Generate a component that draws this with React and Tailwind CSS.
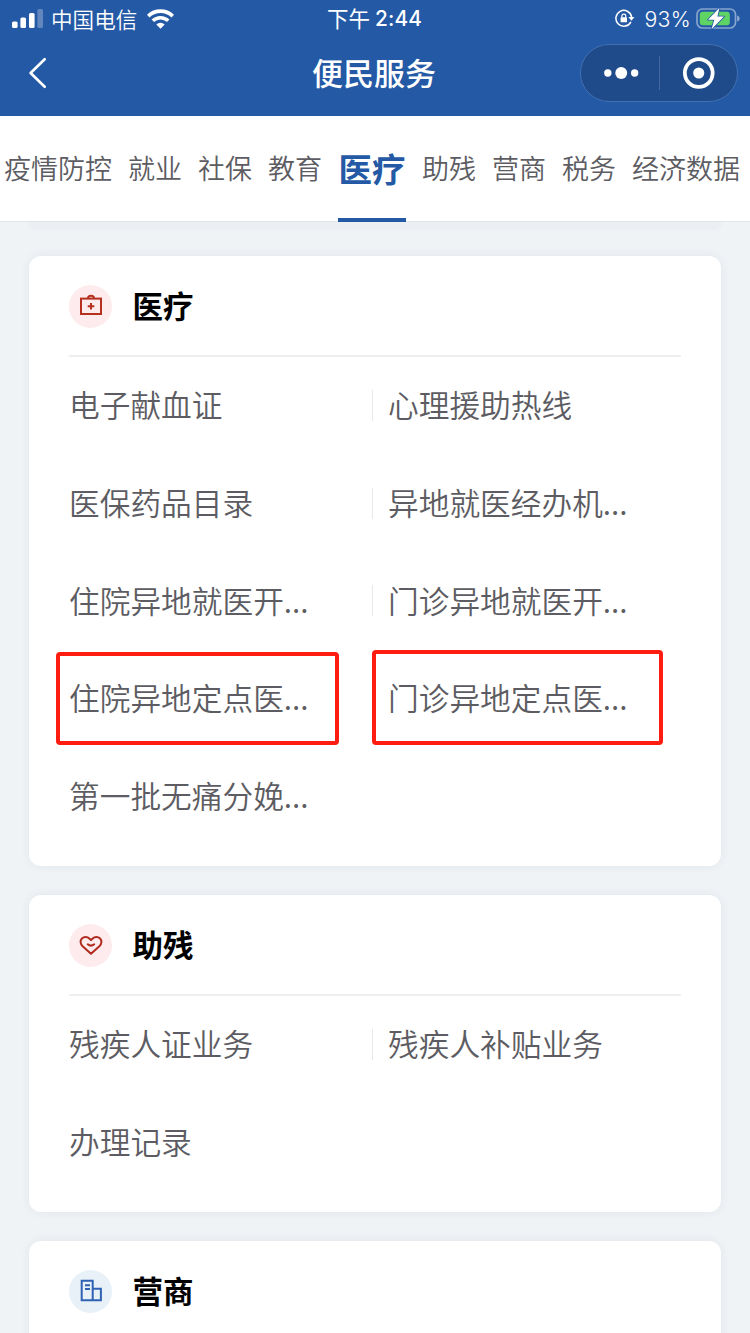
const tabs = ['疫情防控', '就业', '社保', '教育', '医疗', '助残', '营商', '税务', '经济数据'];

const medical = [
  ['电子献血证', '心理援助热线'],
  ['医保药品目录', '异地就医经办机...'],
  ['住院异地就医开...', '门诊异地就医开...'],
  ['住院异地定点医...', '门诊异地定点医...'],
  ['第一批无痛分娩...'],
];

const disability = [['残疾人证业务', '残疾人补贴业务'], ['办理记录']];

function StatusBar() {
  return (
    <div className="grid h-[38px] grid-cols-[1fr_auto_1fr] items-center pl-3 pr-[10px] text-[21px] leading-none">
      <div className="flex items-center">
        <svg width="31" height="20" viewBox="0 0 31 20" fill="#fff">
          <rect x="0" y="12.5" width="5.6" height="6.5" rx="1.5" />
          <rect x="8.4" y="8.5" width="5.6" height="10.5" rx="1.5" />
          <rect x="17" y="4" width="5.6" height="15" rx="1.5" />
          <rect x="25.4" y="0" width="5.6" height="19" rx="1.5" opacity=".28" />
        </svg>
        <span className="ml-2 pb-px text-[21.6px] font-[350]">中国电信</span>
        <svg className="ml-[10px]" width="27" height="20" viewBox="0 0 27 20" fill="none" stroke="#fff" strokeWidth="3.6">
          <path d="M1.2 7.1a17.6 17.6 0 0 1 24.6 0" />
          <path d="M5.8 11.8a11.2 11.2 0 0 1 15.4 0" />
          <path d="M9.3 15.4a6.2 6.2 0 0 1 8.4 0L13.5 19.8Z" fill="#fff" stroke="none" />
        </svg>
      </div>
      <div className="-ml-[3px] flex items-center gap-[5px]">
        <span className="-mt-[2px] text-[21.5px]">下午</span>
        <span className="font-['Inter'] text-[20.8px] font-medium tracking-[0.2px]">2:44</span>
      </div>
      <div className="flex items-center justify-end">
        <svg width="20" height="19" viewBox="0 0 20 19" fill="none" stroke="#fff" strokeWidth="1.5">
          <path d="M15.9 12.8A7.9 7.9 0 1 1 16.6 8" />
          <path d="M13.4 8h6l-3 3.8Z" fill="#fff" stroke="none" />
          <rect x="5.6" y="8.3" width="6.4" height="5" rx=".6" fill="#fff" stroke="none" />
          <path d="M6.9 8.6V7a1.9 1.9 0 0 1 3.8 0v1.6" strokeWidth="1.2" />
        </svg>
        <span className="ml-[9px] pt-px font-['Inter'] text-[21.3px] font-light tracking-[0.3px]">93%</span>
        <svg className="-mt-px ml-[5px]" width="44" height="23" viewBox="0 0 44 23">
          <rect x="1" y="2" width="38.5" height="19" rx="5.5" fill="none" stroke="#fff" strokeOpacity=".45" strokeWidth="1.7" />
          <rect x="3.8" y="4.8" width="30" height="13.4" rx="3" fill="#5fd364" />
          <path d="M41.2 8.4v6.2c1.6-.6 2.4-1.6 2.4-3.1s-.8-2.5-2.4-3.1Z" fill="#fff" fillOpacity=".5" />
          <path d="M23.5 .8 12 12.8h6.300l-2.800 9.400L28 9.600h-6.600Z" fill="#fff" stroke="#2459a5" strokeWidth="1.6" strokeLinejoin="round" paintOrder="stroke" />
        </svg>
      </div>
    </div>
  );
}

function NavBar() {
  return (
    <div className="grid h-[70px] grid-cols-[1fr_auto_1fr] items-center px-[12px]">
      <svg className="ml-4" width="20" height="32" viewBox="0 0 20 32" fill="none" stroke="#fff" strokeWidth="2.6" strokeLinecap="round" strokeLinejoin="round">
        <path d="M16.7 2.2 2.600 16l14.100 13.800" />
      </svg>
      <h1 className="-ml-[2px] -mt-[4px] text-[31px] font-medium leading-none">便民服务</h1>
      <div className="flex h-[58px] w-[158px] items-center justify-self-end rounded-full border border-[#4270b0] bg-[#1f4b8b]">
        <svg width="78" height="34" viewBox="0 0 78 34" fill="#fff">
          <circle cx="27" cy="17" r="3.7" />
          <circle cx="40.5" cy="17" r="6" />
          <circle cx="54" cy="17" r="3.7" />
        </svg>
        <div className="h-[34px] w-px bg-[#4468a0]" />
        <svg width="78" height="34" viewBox="0 0 78 34">
          <circle cx="39" cy="17" r="14" fill="none" stroke="#fff" strokeWidth="3.8" />
          <circle cx="39" cy="17" r="5.6" fill="#fff" />
        </svg>
      </div>
    </div>
  );
}

function Tabs() {
  return (
    <nav className="flex h-[106px] gap-4 border-b border-[#e4e7ea] bg-white pl-1">
      {tabs.map((t) =>
        t === '医疗' ? (
          <div key={t} className="-mb-px flex w-[68px] shrink-0 items-center justify-center border-b-4 border-[#2459a5] pt-px text-[33.5px] font-bold leading-none text-[#2459a5]">
            {t}
          </div>
        ) : (
          <div key={t} className="flex shrink-0 items-center pb-[2px] text-[27px] font-[350] leading-none text-[#5c5c62]">
            {t}
          </div>
        )
      )}
    </nav>
  );
}

function MedicalIcon() {
  return (
    <svg width="24" height="24" viewBox="0 0 24 24" fill="none" stroke="#b5301f" strokeWidth="2">
      <rect x="2" y="4.6" width="20" height="15.4" />
      <path d="M9 4.400a3 2.600 0 0 1 6 0M12 9v6.600M8.700 12.300h6.600" />
    </svg>
  );
}

function HeartIcon() {
  return (
    <svg width="24" height="24" viewBox="0 0 24 24" fill="none" stroke="#b02a1d" strokeWidth="2" strokeLinejoin="round" strokeLinecap="round">
      <path d="M12 20.800 3.600 13.200C1.200 10.900.9 7.500 2.900 5.500c2.100-2 5.500-1.900 7.400 0L12 7.100l1.700-1.600c1.900-1.900 5.300-2 7.400 0 2 2 1.700 5.400-.7 7.700Z" />
      <path d="M8.800 11.300c1.900 1.600 4.500 1.600 6.400 0" />
    </svg>
  );
}

function BuildingIcon() {
  return (
    <svg width="24" height="24" viewBox="0 0 24 24" fill="none" stroke="#2f62b3" strokeWidth="2">
      <path d="M2.700 1.700h11v19.600h-11ZM13.700 9.700h8.200v11.600h-8.200M6 6.200h5M6 10h5" />
    </svg>
  );
}

function Card({ title, icon, tint, rows, marked }) {
  return (
    <section className="rounded-[12px] bg-white px-10 pb-[20.5px] shadow-[0_0_10px_rgba(40,60,90,0.07)]">
      <div className="flex h-[101px] items-center border-b-2 border-[#eeeff0] pt-[2px]">
        <div className={`flex size-[43px] items-center justify-center rounded-full ${tint}`}>{icon}</div>
        <h2 className="-mt-[2px] ml-[20.5px] text-[30.5px] font-bold leading-none text-black">{title}</h2>
      </div>
      {rows.map((row, i) => (
        <div key={i} className="relative flex h-[97.75px] items-center text-[30.7px] font-[350] leading-none text-[#5c5c62]">
          <div className="w-[303px] whitespace-nowrap pb-[2px]">{row[0]}</div>
          {row[1] && (
            <div className="flex h-[31px] items-center whitespace-nowrap border-l border-[#e7e8ea] pb-[2px] pl-[15px]">{row[1]}</div>
          )}
          {marked === i && (
            <>
              <div className="absolute -left-[13px] top-[2px] h-[93px] w-[283px] rounded-[4px] border-4 border-[#ff1d12]" />
              <div className="absolute left-[303px] top-0 h-[95px] w-[291px] rounded-[4px] border-4 border-[#ff1d12]" />
            </>
          )}
        </div>
      ))}
    </section>
  );
}

export default function App() {
  return (
    <div className="flex h-[1333px] w-[750px] flex-col overflow-hidden bg-[#eff3f6] font-['Noto_Sans_CJK_SC',sans-serif]">
      <header className="h-[116px] shrink-0 bg-[#2459a5] text-white">
        <StatusBar />
        <NavBar />
      </header>
      <div className="shrink-0">
        <Tabs />
      </div>
      <div className="mx-[29px] h-[5px] shrink-0 rounded-b-[12px] bg-[#eceff2] shadow-[0_1px_4px_rgba(40,60,90,0.05)]" />
      <main className="flex flex-col gap-[29px] px-[29px] pt-[28.5px]">
        <Card title="医疗" icon={<MedicalIcon />} tint="bg-[#fdebed]" rows={medical} marked={3} />
        <Card title="助残" icon={<HeartIcon />} tint="bg-[#fdebed]" rows={disability} />
        <Card title="营商" icon={<BuildingIcon />} tint="bg-[#e8f0f8]" rows={[]} />
      </main>
    </div>
  );
}
